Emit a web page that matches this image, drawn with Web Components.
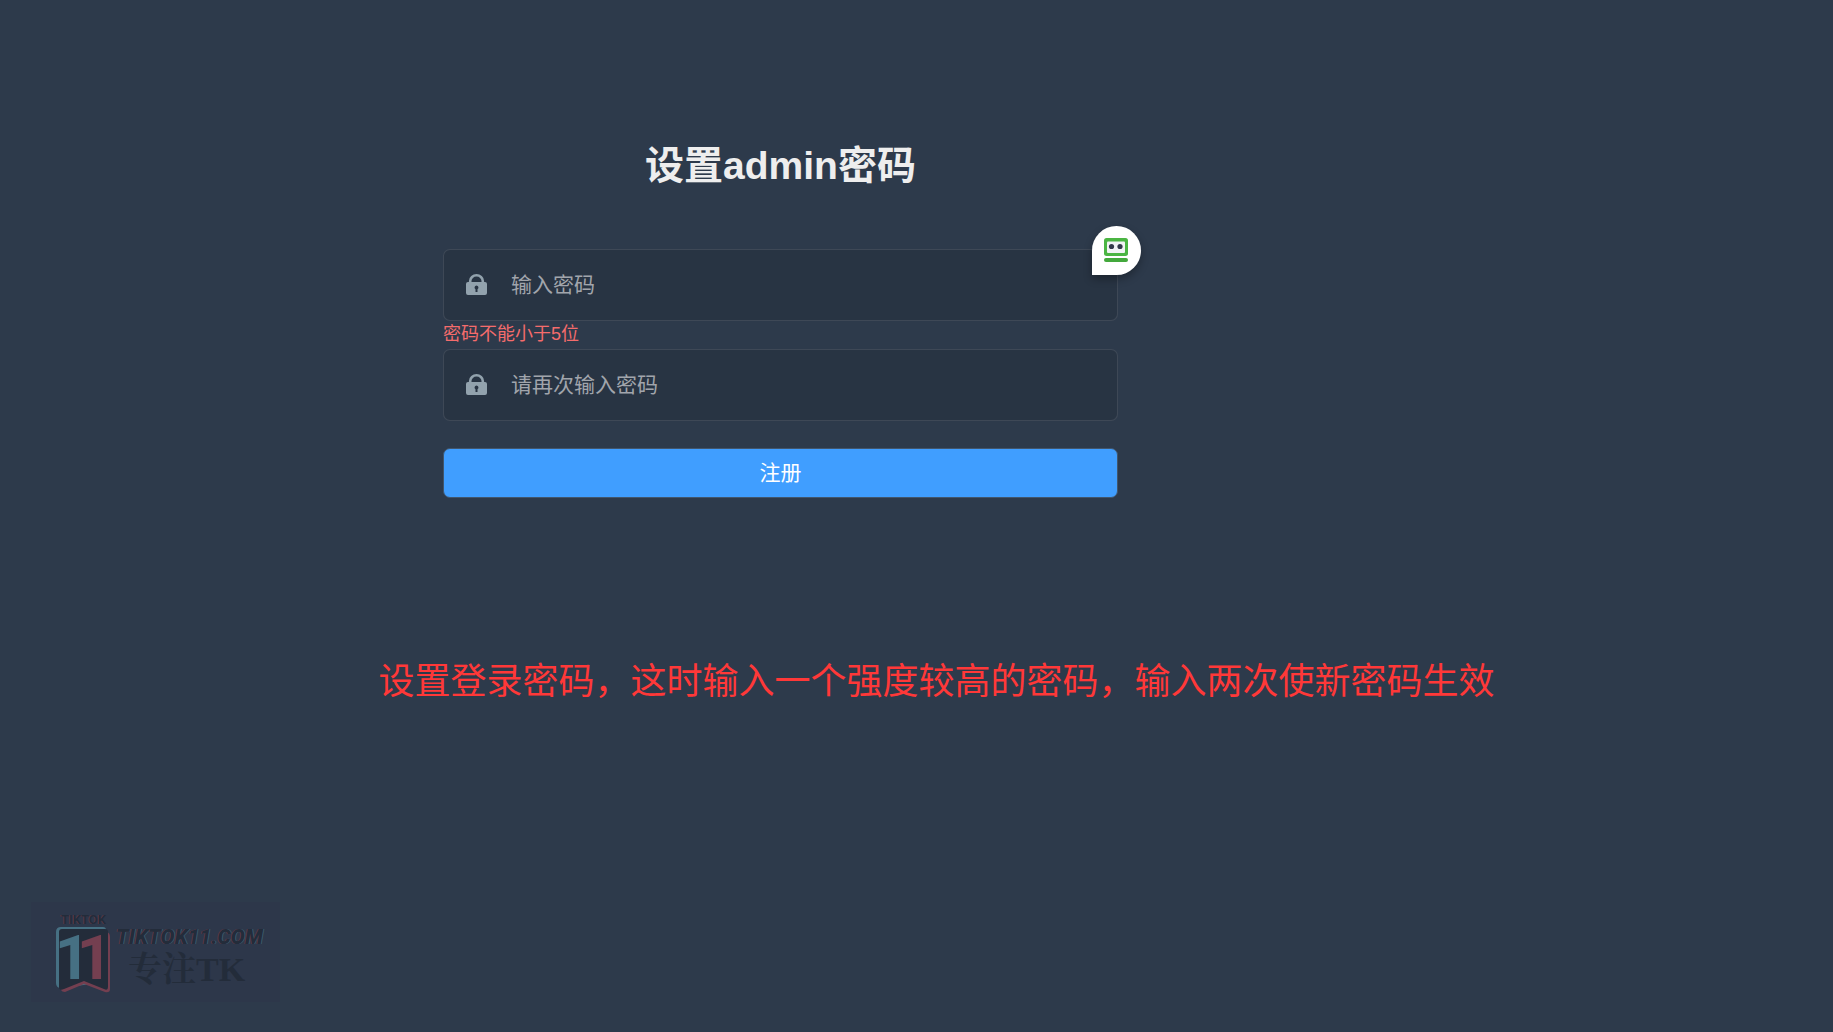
<!DOCTYPE html>
<html lang="zh-CN">
<head>
<meta charset="utf-8">
<meta name="viewport" content="width=device-width, initial-scale=1">
<title>设置admin密码</title>
<style>
    html {
        background: #2d3a4b;
    }
    body {
        margin: 0;
        font-family: "Liberation Sans", "Noto Sans CJK SC", sans-serif;
    }
</style>
</head>
<body>
<setup-page>
    <password-form heading="设置admin密码" action-label="注册">
        <password-field name="password" placeholder="输入密码" error="密码不能小于5位">
            <filler-badge slot="badge"></filler-badge>
        </password-field>
        <password-field name="confirm" placeholder="请再次输入密码"></password-field>
    </password-form>
    <setup-note slot="note">设置登录密码，这时输入一个强度较高的密码，输入两次使新密码生效</setup-note>
    <site-mark slot="mark"></site-mark>
</setup-page>

<script>
class SetupPage extends HTMLElement {

    constructor() {
        super();
        this.attachShadow({mode: "open"});
        this.shadowRoot.innerHTML = `
            <style>
                :host {
                    display: flex;
                    flex-direction: column;
                    box-sizing: border-box;
                    min-height: 100vh;
                    padding: 136px 0 30px;
                }
                main {
                    display: flex;
                    justify-content: center;
                    padding-right: 272px;
                }
                aside {
                    margin-top: 153px;
                    padding-left: 40px;
                }
                footer {
                    margin-top: auto;
                    padding-left: 31px;
                }
            </style>
            <main><slot></slot></main>
            <aside><slot name="note"></slot></aside>
            <footer><slot name="mark"></slot></footer>
        `;
    }

}

class PasswordForm extends HTMLElement {

    constructor() {
        super();
        this.attachShadow({mode: "open"});
    }

    connectedCallback() {
        this.shadowRoot.innerHTML = `
            <style>
                :host {
                    display: block;
                    flex: 0 1 675px;
                }
                h1 {
                    margin: 0 0 53px;
                    color: #eee;
                    font-size: 39px;
                    line-height: 60px;
                    text-align: center;
                }
                button {
                    display: block;
                    box-sizing: border-box;
                    width: 100%;
                    height: 50px;
                    padding: 0 0 4px;
                    border: 1px solid #41566d;
                    border-radius: 7px;
                    background: #409eff;
                    color: #fff;
                    font: inherit;
                    font-size: 21px;
                    cursor: pointer;
                }
                button:hover {
                    background: #66b1ff;
                }
            </style>
            <form>
                <h1></h1>
                <slot></slot>
                <button type="submit"></button>
            </form>
        `;
        this.shadowRoot.querySelector("h1").textContent = this.getAttribute("heading");
        this.shadowRoot.querySelector("button").textContent = this.getAttribute("action-label");
        this.shadowRoot.querySelector("form").addEventListener("submit", e => e.preventDefault());
    }

}

class PasswordField extends HTMLElement {

    constructor() {
        super();
        this.attachShadow({mode: "open"});
    }

    connectedCallback() {
        this.shadowRoot.innerHTML = `
            <style>
                :host {
                    display: block;
                    margin-bottom: 27px;
                }
                :host([error]) {
                    margin-bottom: 2px;
                }
                .box {
                    position: relative;
                    display: flex;
                    align-items: center;
                    box-sizing: border-box;
                    height: 72px;
                    border: 1px solid rgba(255, 255, 255, 0.1);
                    border-radius: 7px;
                    background: rgba(0, 0, 0, 0.1);
                }
                label {
                    display: flex;
                    padding: 0 24px 1px 22px;
                    color: #92a2ad;
                }
                input {
                    flex: 1;
                    box-sizing: border-box;
                    min-width: 0;
                    height: 100%;
                    padding: 0 0 1px;
                    border: 0;
                    outline: none;
                    background: transparent;
                    color: #fff;
                    font: inherit;
                    font-size: 21px;
                }
                input::placeholder {
                    color: #a1a5ac;
                    opacity: 1;
                }
                p {
                    margin: 0;
                    color: #f56c6c;
                    font-size: 18px;
                    line-height: 26px;
                }
            </style>
            <div class="box">
                <label for="input">
                    <svg width="21" height="21" viewBox="0 0 21 21" aria-hidden="true">
                        <path d="M4.200 8V7a6.300 5.700 0 0 1 12.600 0V8" fill="none" stroke="currentColor" stroke-width="2.600"/>
                        <path fill="currentColor" fill-rule="evenodd" d="M2 8h17q2 0 2 2v9q0 2-2 2H2q-2 0-2-2v-9q0-2 2-2zm8.500 3.500a2 2 0 0 0-1 3.700V18h2v-2.800a2 2 0 0 0-1-3.700z"/>
                    </svg>
                </label>
                <input id="input" type="password" autocomplete="new-password">
                <slot name="badge"></slot>
            </div>
        `;
        const $input = this.shadowRoot.querySelector("input");
        $input.name = this.getAttribute("name");
        $input.placeholder = this.getAttribute("placeholder");
        $input.setAttribute("aria-label", $input.placeholder);

        // Only render the message line when there is something to say
        const error = this.getAttribute("error");
        if (!error) return;
        const $error = document.createElement("p");
        $error.textContent = error;
        this.shadowRoot.appendChild($error);
    }

}

class FillerBadge extends HTMLElement {

    constructor() {
        super();
        this.attachShadow({mode: "open"});
        this.shadowRoot.innerHTML = `
            <style>
                :host {
                    position: absolute;
                    top: -24px;
                    right: -24px;
                }
                button {
                    display: flex;
                    align-items: center;
                    justify-content: center;
                    box-sizing: border-box;
                    width: 49px;
                    height: 49px;
                    padding: 0 1px 1px 0;
                    border: 0;
                    border-radius: 50% 50% 50% 0;
                    background: #fff;
                    box-shadow: 0 4px 8px rgba(0, 0, 0, 0.3);
                    cursor: pointer;
                }
            </style>
            <button type="button" aria-label="RoboForm">
                <svg width="24" height="24" viewBox="0 0 24 24" aria-hidden="true">
                    <rect width="24" height="18" rx="2.500" fill="#4bb543"/>
                    <rect x="3" y="3.500" width="18" height="11.500" rx="1" fill="#f2f3f5"/>
                    <circle cx="7.500" cy="8.500" r="2.600" fill="#32384a"/>
                    <circle cx="16" cy="8.500" r="2.600" fill="#32384a"/>
                    <rect y="20" width="24" height="4" rx="2" fill="#43a83c"/>
                </svg>
            </button>
        `;
    }

}

class SetupNote extends HTMLElement {

    constructor() {
        super();
        this.attachShadow({mode: "open"});
        this.shadowRoot.innerHTML = `
            <style>
                :host {
                    display: block;
                    color: #ff3838;
                    font-family: "Noto Sans CJK SC", sans-serif;
                    font-size: 36px;
                    line-height: 54px;
                    text-align: center;
                }
            </style>
            <slot></slot>
        `;
    }

}

class SiteMark extends HTMLElement {

    constructor() {
        super();
        this.attachShadow({mode: "open"});
        this.shadowRoot.innerHTML = `
            <style>
                :host {
                    display: flex;
                    gap: 5px;
                    box-sizing: border-box;
                    width: 249px;
                    height: 100px;
                    padding: 10px 0 0 25px;
                    background: #2d374a;
                    color: #232c3a;
                    font-family: Roboto, sans-serif;
                    font-weight: bold;
                }
                .emblem {
                    width: 55px;
                }
                .small {
                    font-size: 13px;
                    line-height: 15px;
                    text-align: center;
                    text-shadow: -1px 0 #5c3a4c;
                }
                .flag {
                    position: relative;
                    height: 66px;
                }
                .flag svg {
                    display: block;
                }
                .digits {
                    position: absolute;
                    inset: 0;
                    display: grid;
                    grid-template-columns: 22px 22px;
                    justify-content: center;
                    font-size: 62px;
                    line-height: 62px;
                }
                .digits span {
                    display: flex;
                    justify-content: center;
                }
                .one {
                    color: #467083;
                }
                .two {
                    color: #743f50;
                }
                .site {
                    padding-top: 12px;
                    font-size: 21px;
                    font-style: italic;
                    font-weight: 900;
                    line-height: 26px;
                    text-shadow: -1px 0 #5c3a4c, 1px 0 #3c5a6b;
                }
                .motto {
                    padding-left: 12px;
                    font-family: "Liberation Serif", "Noto Serif CJK SC", "Noto Sans CJK SC", serif;
                    font-size: 34px;
                    line-height: 40px;
                }
            </style>
            <div class="emblem">
                <div class="small">TIKTOK</div>
                <div class="flag">
                    <svg width="55" height="66" viewBox="0 0 55 66" aria-hidden="true">
                        <path fill="#467083" d="M5 0H47Q50 0 50 3V55L5 61Q0 61 0 56V5Q0 0 5 0z"/>
                        <path fill="#743f50" d="M8 8L51 5Q54 6 54 10V62Q54 66 49 65L28 57 9 65Q6 65 5 63z"/>
                        <path fill="#232c3a" d="M6 2H49Q52 2 52 5V60Q52 64 48 62L28 54 8 62Q3 64 3 60V5Q3 2 6 2z"/>
                    </svg>
                    <div class="digits"><span class="one">1</span><span class="two">1</span></div>
                </div>
            </div>
            <div>
                <div class="site">TIKTOK11.COM</div>
                <div class="motto">专注TK</div>
            </div>
        `;
    }

}

window.customElements.define("setup-page", SetupPage);
window.customElements.define("password-form", PasswordForm);
window.customElements.define("password-field", PasswordField);
window.customElements.define("filler-badge", FillerBadge);
window.customElements.define("setup-note", SetupNote);
window.customElements.define("site-mark", SiteMark);
</script>
</body>
</html>
